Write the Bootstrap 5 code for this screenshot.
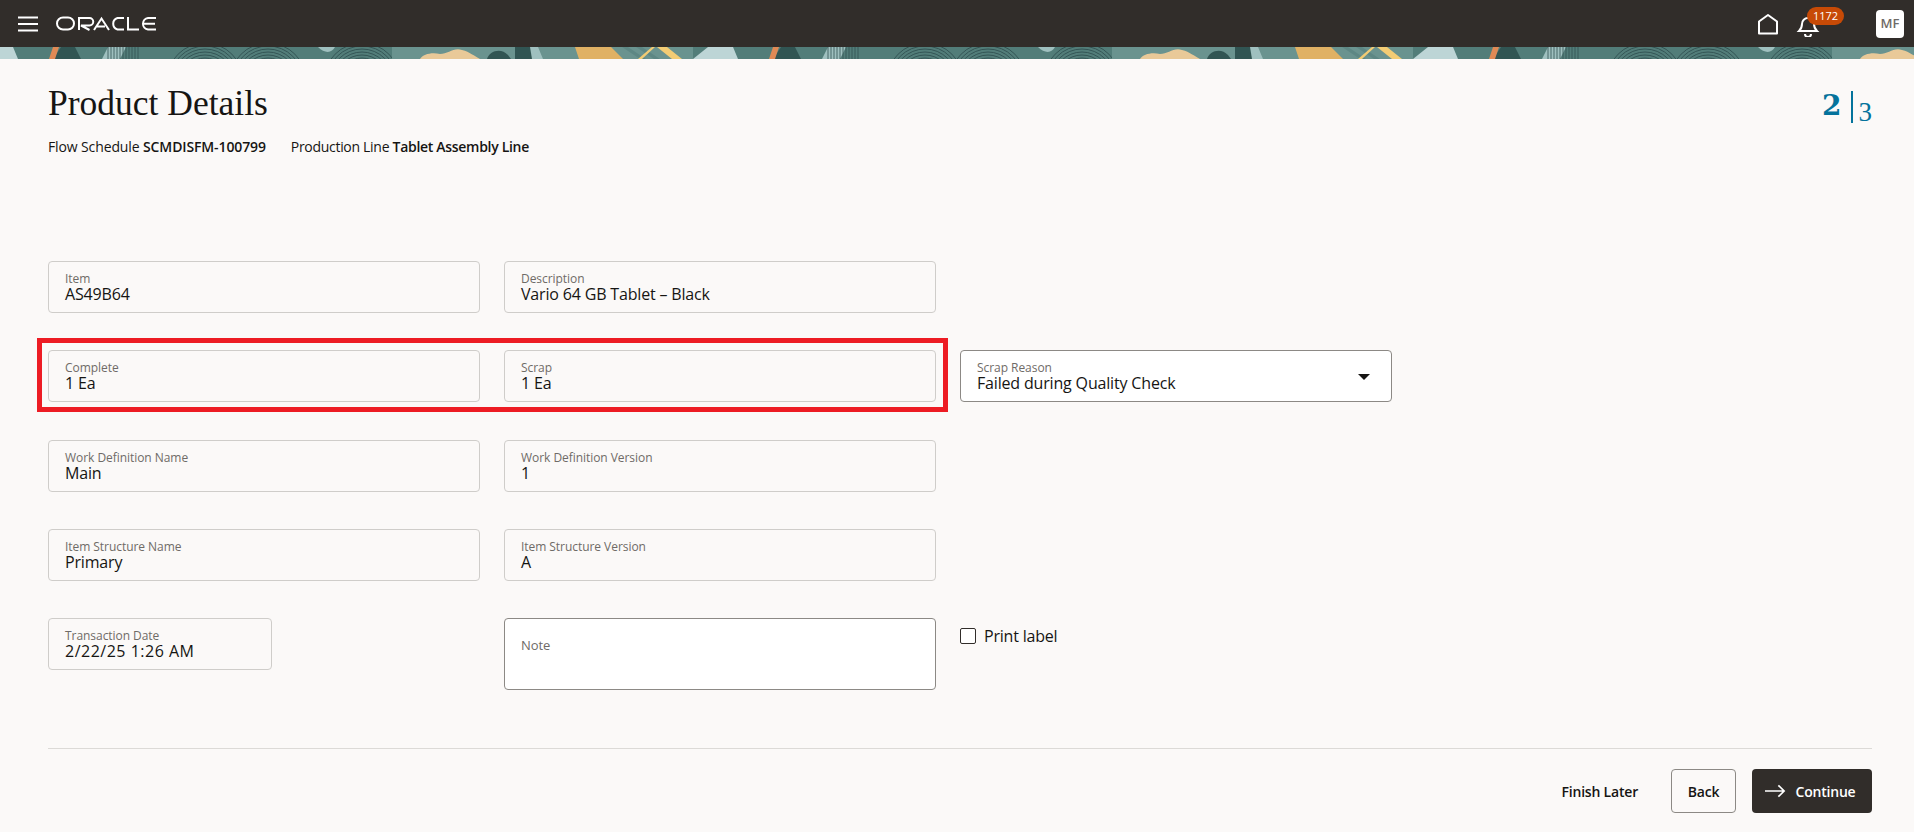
<!DOCTYPE html>
<html lang="en">
<head>
<meta charset="utf-8">
<title>Product Details</title>
<link href="https://cdn.jsdelivr.net/npm/bootstrap@5.3.0/dist/css/bootstrap.min.css" rel="stylesheet">
<style>
html,body{height:100%}
body{background:#fbf9f8;font-family:"Open Sans","Noto Sans",sans-serif;color:#161513;overflow:hidden}
.top-bar{height:47px;background:#312d2a;padding:0 18px}
.burger{width:20px;height:16px}
.ora-logo{width:101px;height:15px;margin-left:18px}
.top-icons{margin-right:-8px}
.bell-wrap{position:relative;width:24px;height:24px;margin-left:16px;margin-right:56px}
.bell-count{position:absolute;left:11px;top:-5px;background:#c74a06;color:#fff;font-size:11px;line-height:18px;height:18px;padding:0 6px;border-radius:9px}
.avatar-box{width:28px;height:28px;border-radius:4px;background:#fff;color:#6f6b67;font-size:13px;font-weight:600}
.art-strip{height:12px;display:block;width:100%}
.page-body{padding:0 42px 0 48px}
.page-head{padding-top:23px;height:202px}
.page-title{font-family:"Liberation Serif",serif;font-size:35.500px;line-height:42px;margin:0}
.sub-line{font-size:14px;line-height:18px;margin-top:14px}
.sub-line b{font-weight:600}
.sub-line span:first-child{letter-spacing:-.12px}
.sub-line span+span{margin-left:25px;letter-spacing:-.3px}
.step-mark{color:#04739c;padding-top:9px}
.step-now{font-family:"DejaVu Serif",serif;font-size:28px;font-weight:700;line-height:30px}
.step-bar{width:2px;height:32px;background:#04739c;margin:0 6px 0 9px}
.step-all{font-family:"Liberation Serif",serif;font-size:27px;line-height:30px;margin-top:6px}
.form-wrap{display:grid;grid-template-columns:432px 432px 432px;column-gap:24px;row-gap:37.250px;position:relative;align-items:start}
.fld{height:52px;border:1px solid #cfcdca;border-radius:4px;padding:10px 16px 0;line-height:1}
.fld-label{display:block;font-size:12px;line-height:14px;color:#6f6b67;letter-spacing:-.05px}
.fld-value{display:block;font-size:16px;line-height:17px;color:#161513;letter-spacing:-.17px}
.fld-live{background:#fff;border-color:#8c8985;position:relative}
.fld-date{width:224px}
.fld-date .fld-value{letter-spacing:.5px}
.fld-note{height:72px;padding-top:19px}
.fld-note .fld-label{font-size:13px}
.caret-mark{position:absolute;right:21px;top:23px;width:0;height:0;border-left:6px solid transparent;border-right:6px solid transparent;border-top:6px solid #161513}
.print-opt{display:flex;align-items:center;gap:8px;padding-top:8px;font-size:16px;line-height:20px;letter-spacing:-.2px}
.tick-box{width:16px;height:16px;border:1.500px solid #312d2a;border-radius:2px;background:#fff}
.red-mark{position:absolute;left:-11px;top:77px;width:911px;height:74px;border:5px solid #ed1c24;pointer-events:none}
.foot-bar{border-top:1px solid #dcdad7;margin-top:58px;padding-top:20px}
.btn-plain,.btn-line,.btn-dark-solid{height:44px;font-size:14px;font-weight:600;border-radius:4px;display:flex;align-items:center;justify-content:center;letter-spacing:-.2px}
.btn-plain{color:#161513;margin-right:33px}
.btn-line{width:65px;border:1px solid #8c8985;background:#fbf9f8;color:#161513;margin-right:16px}
.btn-dark-solid{width:120px;background:#312d2a;color:#fff;gap:9px;padding:0 3px 0 0;border:0}
</style>
</head>
<body>
<header class="top-bar d-flex align-items-center justify-content-between">
  <div class="d-flex align-items-center">
    <svg class="burger" viewBox="0 0 20 16" aria-hidden="true"><path d="M0 1.500h20M0 8h20M0 14.500h20" stroke="#fff" stroke-width="2"/></svg>
    <svg class="ora-logo" viewBox="0 0 101 15" role="img" aria-label="ORACLE" fill="none" stroke="#fff" stroke-width="2">
      <rect x="1" y="1.500" width="17" height="12" rx="6"/>
      <path d="M23 14V2h10.500a3.500 3.500 0 0 1 0 7.500H25L33.500 14"/>
      <path d="M38 14 45.500 2.500 53 14M41 10.500h8"/>
      <path d="M68 2h-6.500a6 6 0 0 0 0 11.500H68"/>
      <path d="M72 1v12.500h11"/>
      <path d="M100 2h-8a5.800 5.800 0 0 0 0 11.500h8M87 7.700h12"/>
    </svg>
  </div>
  <div class="d-flex align-items-center top-icons">
    <svg width="24" height="24" viewBox="0 0 24 24" aria-hidden="true"><path d="M3 21.500V9.500L12 3l9 6.500v12z" fill="none" stroke="#fff" stroke-width="2" stroke-linejoin="round"/></svg>
    <div class="bell-wrap">
      <svg width="24" height="24" viewBox="0 0 24 24" aria-hidden="true" fill="none" stroke="#fff" stroke-width="2"><path d="M3 18h18c-2-2-3-3-3-7a6 6 0 0 0-12 0c0 4-1 5-3 7z"/><path d="M9 21a3 3 0 0 0 6 0"/></svg>
      <span class="bell-count">1172</span>
    </div>
    <div class="avatar-box d-flex align-items-center justify-content-center">MF</div>
  </div>
</header>
<svg class="art-strip" height="12" aria-hidden="true">
  <defs>
    <g id="ring-set" fill="none" stroke="#2f4f50" stroke-width=".9">
      <circle r="5"/><circle r="8"/><circle r="11"/><circle r="14"/><circle r="17"/><circle r="20"/><circle r="23"/><circle r="26"/><circle r="29"/><circle r="32"/><circle r="35"/><circle r="38"/>
    </g>
    <pattern id="artwork" width="720" height="12" patternUnits="userSpaceOnUse">
      <rect width="720" height="12" fill="#527d79"/>
      <path d="M0 0h13l5 12H0z" fill="#bdd5d6"/>
      <path d="M53 12 61 0h14l6 12z" fill="#315553"/>
      <path d="M49 12 53 0h6l-4 12z" fill="#e08a55"/>
      <path d="M102 12 108 0h18l-6 12z" fill="#9fc0bf"/>
      <path d="M108 0v12M111 0v12M114 0v12M117 0v12M120 0v12M123 0v12M126 0v12M129 0v12M132 0v12M135 0v12M138 0v12" stroke="#2f4f50" stroke-width=".8"/>
      <use href="#ring-set" x="205" y="34"/>
      <use href="#ring-set" x="268" y="34"/>
      <path d="M318 0h17c-3 6-10 7-17 0z" fill="#9fc0bf"/>
      <use href="#ring-set" x="362" y="34"/>
      <rect x="392" width="301" height="12" fill="#6a938f"/>
      <path d="M420 12c3-5 12-7 20-5 8 0 14-7 22-4 8 2 12 6 18 9z" fill="#e9c998"/>
      <path d="M487 12c2-8 14-12 21-4l3 4z" fill="#315553"/>
      <path d="M515 0h17l1 12h-18z" fill="#315553"/>
      <path d="M530 0h8l5 12h-11z" fill="#9fc0bf"/>
      <path d="M575 0h36l12 12h-44z" fill="#e0b164"/>
      <path d="M622 0h6l18 12h-6zM636 0h6l18 12h-6z" fill="#5d8784"/>
      <path d="M638 12 652 0h3l-13 12z" fill="#f3cc74"/>
      <path d="M657 0h10l15 12h-10z" fill="#f3cc74"/>
      <path d="M693 12 708 0h12v12z" fill="#bdd5d6"/>
    </pattern>
  </defs>
  <rect width="100%" height="12" fill="url(#artwork)"/>
</svg>
<main class="page-body">
  <div class="page-head d-flex justify-content-between align-items-start">
    <div>
      <h1 class="page-title">Product Details</h1>
      <div class="sub-line"><span>Flow Schedule <b>SCMDISFM-100799</b></span><span>Production Line <b>Tablet Assembly Line</b></span></div>
    </div>
    <div class="step-mark d-flex align-items-start"><span class="step-now">2</span><span class="step-bar"></span><span class="step-all">3</span></div>
  </div>
  <div class="form-wrap">
    <div class="fld"><span class="fld-label">Item</span><span class="fld-value">AS49B64</span></div>
    <div class="fld"><span class="fld-label">Description</span><span class="fld-value">Vario 64 GB Tablet – Black</span></div>
    <div></div>
    <div class="fld"><span class="fld-label">Complete</span><span class="fld-value">1 Ea</span></div>
    <div class="fld"><span class="fld-label">Scrap</span><span class="fld-value">1 Ea</span></div>
    <div class="fld fld-live"><span class="fld-label">Scrap Reason</span><span class="fld-value">Failed during Quality Check</span><span class="caret-mark"></span></div>
    <div class="fld"><span class="fld-label">Work Definition Name</span><span class="fld-value">Main</span></div>
    <div class="fld"><span class="fld-label">Work Definition Version</span><span class="fld-value">1</span></div>
    <div></div>
    <div class="fld"><span class="fld-label">Item Structure Name</span><span class="fld-value">Primary</span></div>
    <div class="fld"><span class="fld-label">Item Structure Version</span><span class="fld-value">A</span></div>
    <div></div>
    <div class="fld fld-date"><span class="fld-label">Transaction Date</span><span class="fld-value">2/22/25 1:26 AM</span></div>
    <div class="fld fld-live fld-note"><span class="fld-label">Note</span></div>
    <label class="print-opt"><span class="tick-box"></span>Print label</label>
    <div class="red-mark"></div>
  </div>
  <div class="foot-bar d-flex justify-content-end align-items-center">
    <span class="btn-plain">Finish Later</span>
    <button type="button" class="btn-line">Back</button>
    <button type="button" class="btn-dark-solid"><svg width="21" height="14" viewBox="0 0 22 14" aria-hidden="true"><path d="M0 7h20M14 1l6 6-6 6" fill="none" stroke="#fff" stroke-width="1.800"/></svg>Continue</button>
  </div>
</main>
<script src="https://cdn.jsdelivr.net/npm/bootstrap@5.3.0/dist/js/bootstrap.bundle.min.js"></script>
</body>
</html>
